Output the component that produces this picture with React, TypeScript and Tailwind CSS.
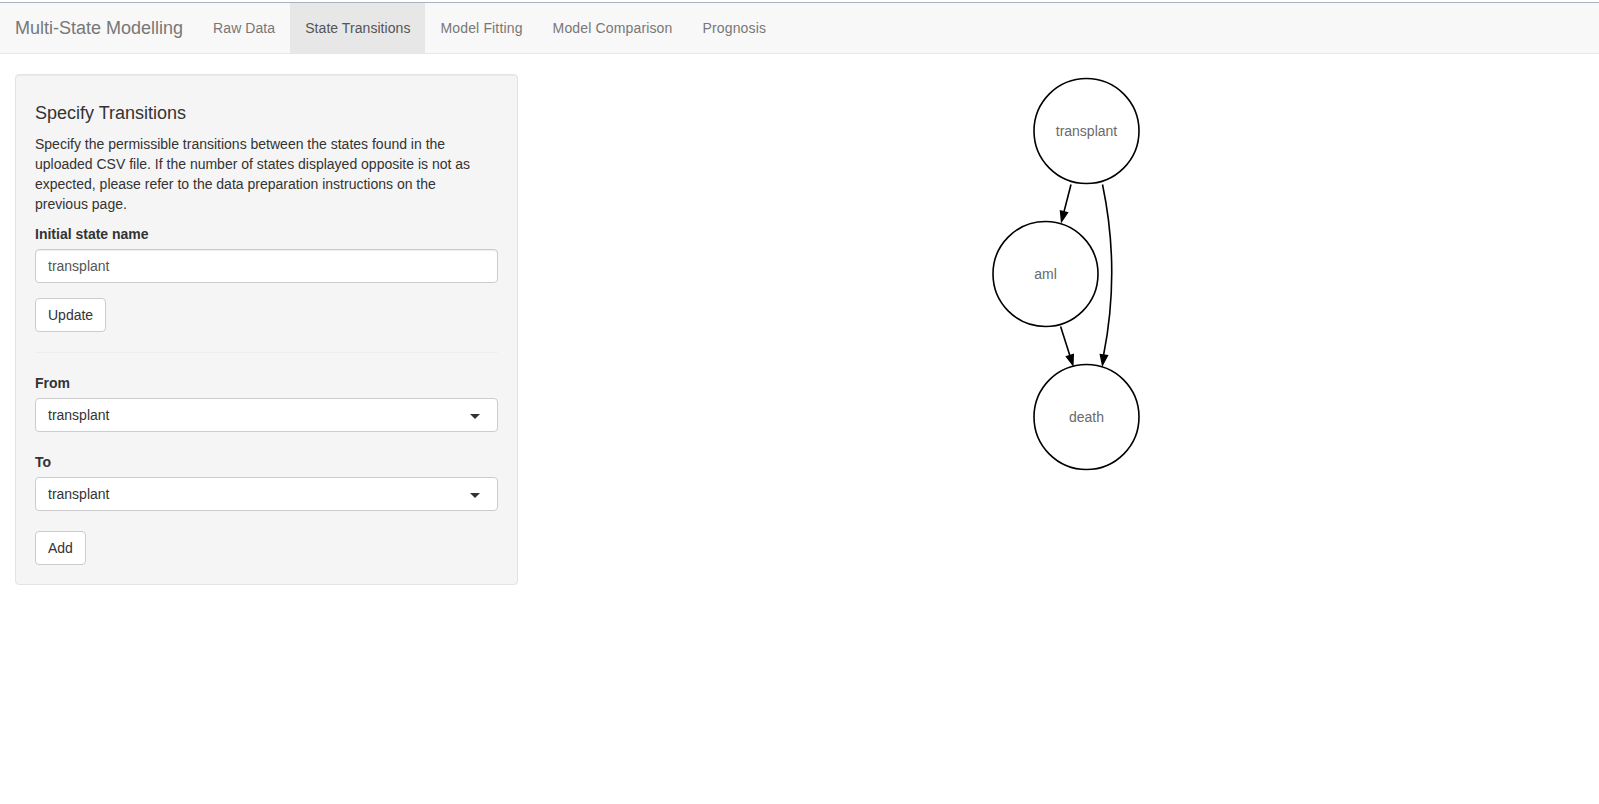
import React from "react";

type Pt = [number, number];

function Arrow({ path, tip, from }: { path: string; tip: Pt; from: Pt }) {
  const dx = tip[0] - from[0];
  const dy = tip[1] - from[1];
  const len = Math.sqrt(dx * dx + dy * dy);
  const ux = dx / len;
  const uy = dy / len;
  const bx = tip[0] - ux * 10;
  const by = tip[1] - uy * 10;
  const nx = -uy * 3.6;
  const ny = ux * 3.6;
  return (
    <g>
      <path d={path + ` L${bx.toFixed(2)},${by.toFixed(2)}`} fill="none" stroke="#000" strokeWidth={1.6} />
      <polygon
        points={`${tip[0]},${tip[1]} ${(bx + nx).toFixed(2)},${(by + ny).toFixed(2)} ${(bx - nx).toFixed(2)},${(by - ny).toFixed(2)}`}
        fill="#000"
        stroke="#000"
        strokeWidth={1.4}
        strokeLinejoin="miter"
      />
    </g>
  );
}

function Graph() {
  const r = 52.5;
  return (
    <svg width="200" height="400" viewBox="0 0 200 400" className="block">
      <circle cx={120.5} cy={56} r={r} fill="#fff" stroke="#000" strokeWidth={1.6} />
      <circle cx={79.5} cy={199} r={r} fill="#fff" stroke="#000" strokeWidth={1.6} />
      <circle cx={120.5} cy={342} r={r} fill="#fff" stroke="#000" strokeWidth={1.6} />
      <Arrow path="M105,109.5" from={[105, 109.5]} tip={[95.5, 146.5]} />
      <Arrow path="M94.6,251.5" from={[94.6, 251.5]} tip={[106.9, 290]} />
      <Arrow path="M136.5,109.5 Q154.5,195 137.5,280.5" from={[140.5, 262]} tip={[136.5, 290]} />
      <text x={120.5} y={61} textAnchor="middle" fontSize="14" fill="#6a6a6a" fontFamily="'Liberation Sans', Arial, sans-serif">
        transplant
      </text>
      <text x={79.5} y={204} textAnchor="middle" fontSize="14" fill="#6a6a6a" fontFamily="'Liberation Sans', Arial, sans-serif">
        aml
      </text>
      <text x={120.5} y={347} textAnchor="middle" fontSize="14" fill="#6a6a6a" fontFamily="'Liberation Sans', Arial, sans-serif">
        death
      </text>
    </svg>
  );
}

function SelectBox({ value }: { value: string }) {
  return (
    <div className="relative h-[34px] w-full rounded-[4px] border border-[#ccc] bg-white px-[12px] py-[6px] text-[14px] leading-[20px] text-[#333]">
      {value}
      <span className="absolute right-[17px] top-[15px] h-0 w-0 border-x-[5px] border-t-[5px] border-x-transparent border-t-[#333]" />
    </div>
  );
}

export default function App() {
  const tabs = ["Raw Data", "State Transitions", "Model Fitting", "Model Comparison", "Prognosis"];
  return (
    <div className="min-h-[804px] bg-white text-[14px] leading-[20px] text-[#333]" style={{ fontFamily: "'Liberation Sans', Arial, Helvetica, sans-serif" }}>
      <div className="h-[2px] bg-white" />
      <div className="h-[1px] bg-[#a9b2c0]" />
      <nav className="flex h-[51px] items-stretch border-b border-[#e7e7e7] bg-[#f8f8f8]">
        <div className="flex items-center pl-[15px] pr-[15px] text-[18px] leading-[20px] text-[#777]">Multi-State Modelling</div>
        {tabs.map((t) => (
          <div
            key={t}
            className={
              t === "State Transitions"
                ? "flex items-center bg-[#e7e7e7] px-[15px] tracking-[0.06px] text-[#555]"
                : t === "Raw Data"
                ? "flex items-center px-[15px] tracking-[0.08px] text-[#777]"
                : "flex items-center px-[15px] tracking-[0.15px] text-[#777]"
            }
          >
            {t}
          </div>
        ))}
      </nav>
      <div className="mt-[20px] flex">
        <div className="w-[533px] shrink-0 px-[15px]">
          <div className="rounded-[4px] border border-[#e3e3e3] bg-[#f5f5f5] p-[19px] shadow-[inset_0_1px_1px_rgba(0,0,0,0.05)]">
            <h4 className="mb-[10px] mt-[10px] text-[18px] font-normal leading-[1.1] text-[#333]">Specify Transitions</h4>
            <p className="mb-[10px] w-[450px] text-[14px] leading-[20px]">
              Specify the permissible transitions between the states found in the uploaded CSV file. If the number of states displayed opposite is not as expected, please refer to the data preparation instructions on the previous page.
            </p>
            <div className="mb-[15px]">
              <label className="mb-[5px] block font-bold">Initial state name</label>
              <div className="h-[34px] w-full rounded-[4px] border border-[#ccc] bg-white px-[12px] py-[6px] leading-[20px] text-[#555] shadow-[inset_0_1px_1px_rgba(0,0,0,0.075)]">
                transplant
              </div>
            </div>
            <button className="h-[34px] rounded-[4px] border border-[#ccc] bg-white px-[12px] py-[6px] leading-[20px] text-[#333]">Update</button>
            <hr className="my-[20px] border-t border-[#eee]" />
            <div className="mb-[20px]">
              <label className="mb-[5px] block font-bold">From</label>
              <SelectBox value="transplant" />
            </div>
            <div className="mb-[20px]">
              <label className="mb-[5px] block font-bold">To</label>
              <SelectBox value="transplant" />
            </div>
            <button className="h-[34px] rounded-[4px] border border-[#ccc] bg-white px-[12px] py-[6px] leading-[20px] text-[#333]">Add</button>
          </div>
        </div>
        <div className="flex flex-1 justify-center px-[15px] pt-[1px]">
          <Graph />
        </div>
      </div>
    </div>
  );
}
